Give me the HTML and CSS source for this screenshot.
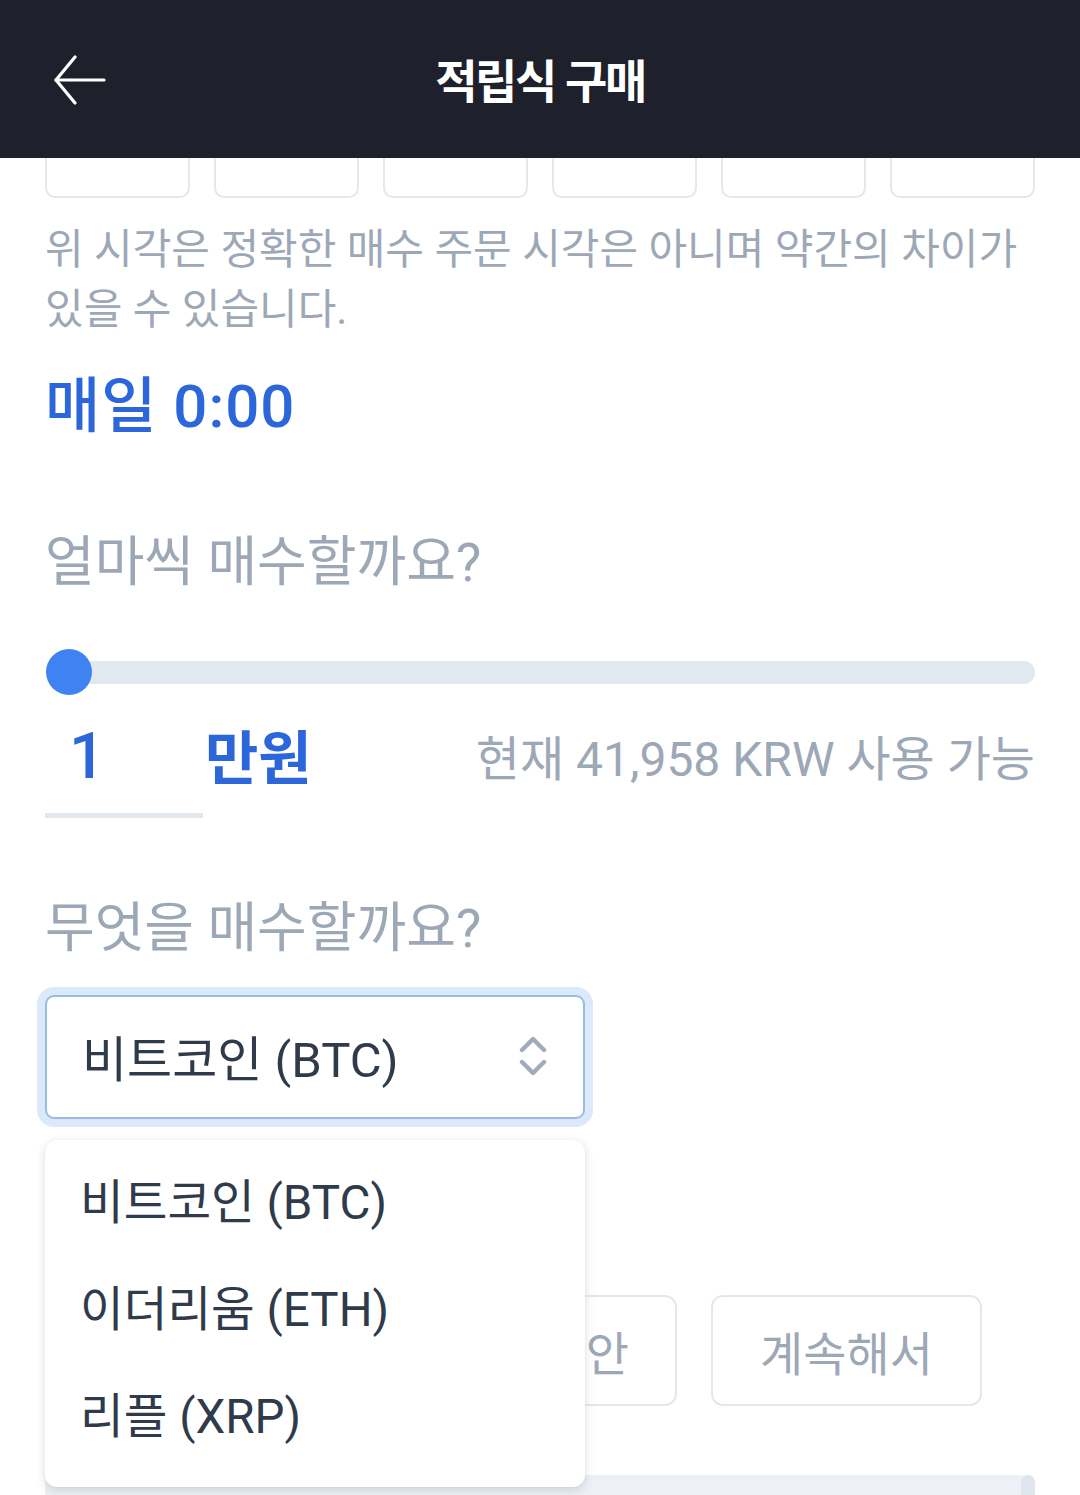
FILE: index.html
```html
<!DOCTYPE html>
<html lang="ko">
<head>
<meta charset="utf-8">
<title>적립식 구매</title>
<link rel="stylesheet" href="styles.css">
</head>
<body>
<header class="topbar">
  <button class="back" aria-label="뒤로">
    <svg width="54" height="50" viewBox="0 0 54 50" fill="none" stroke="#fff" stroke-width="3.2" stroke-linecap="round" stroke-linejoin="round">
      <path d="M3 25 H51"/>
      <path d="M22 2 L3 25 L22 48"/>
    </svg>
  </button>
  <h1 class="title">적립식 구매</h1>
</header>

<main class="content">
  <div class="days">
    <div class="day"></div>
    <div class="day"></div>
    <div class="day"></div>
    <div class="day"></div>
    <div class="day"></div>
    <div class="day"></div>
  </div>

  <p class="note">위 시각은 정확한 매수 주문 시각은 아니며 약간의 차이가 있을 수 있습니다.</p>

  <p class="schedule">매일 0:00</p>

  <h2 class="question q-amount">얼마씩 매수할까요?</h2>

  <div class="slider">
    <div class="track"></div>
    <div class="thumb"></div>
  </div>

  <div class="amount-row">
    <div class="amount-input">1</div>
    <div class="unit">만원</div>
    <div class="avail">현재 41,958 KRW 사용 가능</div>
  </div>

  <h2 class="question q-coin">무엇을 매수할까요?</h2>

  <div class="select-wrap">
    <div class="select">
      <span class="select-text">비트코인 (BTC)</span>
      <svg class="chev" width="28" height="42" viewBox="0 0 28 42" fill="none" stroke="#a0abbb" stroke-width="4.4" stroke-linecap="round" stroke-linejoin="round">
        <path d="M3 15 L14 4 L25 15"/>
        <path d="M3 27 L14 38 L25 27"/>
      </svg>
    </div>
    <ul class="menu">
      <li class="opt">비트코인 (BTC)</li>
      <li class="opt">이더리움 (ETH)</li>
      <li class="opt">리플 (XRP)</li>
    </ul>
  </div>

  <div class="periods">
    <div class="period p1"></div>
    <div class="period p2"><span class="p2-text">안</span></div>
    <div class="period p3">계속해서</div>
  </div>

  <div class="bottom-bar">
    <div class="bar-end"></div>
  </div>
</main>
</body>
</html>
```

FILE: styles.css
```css
* { box-sizing: border-box; }

html, body {
  margin: 0;
  padding: 0;
  background: #ffffff;
}

body {
  font-family: "Roboto", "Noto Sans CJK KR", sans-serif;
  color: #2d3748;
  overflow: hidden;
}

.topbar {
  position: fixed;
  top: 0;
  left: 0;
  right: 0;
  height: 158px;
  background: #1e212b;
  display: flex;
  align-items: center;
  justify-content: center;
  z-index: 10;
}

.back {
  position: absolute;
  left: 53px;
  top: 55px;
  width: 54px;
  height: 50px;
  padding: 0;
  border: 0;
  background: transparent;
  display: block;
}

.back svg { display: block; }

.title {
  margin: 0;
  margin-top: -2px;
  color: #ffffff;
  font-family: "Noto Sans CJK KR", sans-serif;
  font-weight: 700;
  font-size: 46px;
  letter-spacing: -2.5px;
  line-height: 60px;
}

.content {
  padding: 0 45px;
  position: relative;
}

.days {
  margin-top: 88px;
  display: grid;
  grid-template-columns: repeat(6, 1fr);
  gap: 24px;
}

.day {
  height: 110px;
  border: 2px solid #e3e8ee;
  border-radius: 10px;
}

.note {
  margin: 22px 0 0;
  font-size: 42px;
  letter-spacing: 0;
  line-height: 60px;
  color: #9da8b7;
}

.schedule {
  margin: 32px 0 0;
  font-size: 60px;
  line-height: 70px;
  font-weight: 500;
  color: #2b66db;
  letter-spacing: 1px;
}

.question {
  margin: 0;
  font-weight: 400;
  font-size: 54px;
  letter-spacing: 0;
  line-height: 70px;
  color: #9da8b7;
}

.q-amount { margin-top: 86px; }
.q-coin { margin-top: 76px; }

.slider {
  margin-top: 51px;
  height: 46px;
  position: relative;
  display: flex;
  align-items: center;
}

.track {
  width: 100%;
  height: 23px;
  background: #e2e8f0;
  border-radius: 12px;
  margin-left: 2px;
}

.thumb {
  position: absolute;
  left: 1px;
  top: 0;
  width: 46px;
  height: 46px;
  border-radius: 50%;
  background: #3f82f2;
}

.amount-row {
  margin-top: 27px;
  display: flex;
  align-items: flex-start;
}

.amount-input {
  width: 158px;
  padding-left: 24px;
  padding-bottom: 21px;
  line-height: 70px;
  font-size: 64px;
  font-weight: 500;
  color: #2b66db;
  border-bottom: 5px solid #e2e8f0;
}

.unit {
  margin-left: 2px;
  line-height: 70px;
  font-family: "Noto Sans CJK KR", sans-serif;
  font-size: 58px;
  font-weight: 700;
  letter-spacing: 0;
  color: #2b66db;
  margin-top: -3px;
}

.avail {
  margin-left: auto;
  line-height: 70px;
  font-size: 48px;
  letter-spacing: 0;
  color: #9da8b7;
  margin-top: 3px;
}

.select-wrap {
  margin-top: 31px;
  width: 540px;
  position: relative;
}

.select {
  height: 124px;
  border: 2px solid #98bde4;
  border-radius: 9px;
  box-shadow: 0 0 0 8px #dce9fa;
  background: #ffffff;
  display: flex;
  align-items: center;
  justify-content: space-between;
  padding: 0 36px 0 35px;
}

.select-text {
  font-size: 49px;
  letter-spacing: 0;
  color: #2f3b4b;
  margin-top: -4px;
}

.chev { display: block; margin-top: -2px; }

.menu {
  position: absolute;
  top: calc(100% + 21px);
  left: 0;
  width: 540px;
  height: 347px;
  margin: 0;
  padding: 10px 0 0;
  list-style: none;
  background: #ffffff;
  border-radius: 12px;
  box-shadow: 0 3px 10px rgba(30, 41, 59, 0.16), 0 0 2px rgba(30, 41, 59, 0.06);
  z-index: 5;
}

.opt {
  height: 107px;
  line-height: 107px;
  padding-left: 35px;
  font-size: 47.5px;
  letter-spacing: 0;
  color: #2f3b4b;
}

.periods {
  margin-top: 176px;
  display: flex;
  gap: 34px;
}

.period {
  height: 111px;
  border: 2px solid #e3e8ee;
  border-radius: 12px;
  display: flex;
  align-items: center;
  justify-content: center;
  font-family: "Noto Sans CJK KR", sans-serif;
  font-size: 47px;
  letter-spacing: 0;
  color: #9da8b7;
}

.p1 { width: 327px; }
.p2 {
  width: 271px;
  justify-content: flex-end;
  padding-right: 46px;
}
.p3 { width: 271px; }

.bottom-bar {
  margin-top: 69px;
  height: 80px;
  background: #edf1f6;
  border-radius: 8px 8px 0 0;
  display: flex;
  justify-content: flex-end;
}

.bar-end {
  width: 14px;
  height: 100%;
  background: #dfe5ec;
  border-radius: 7px 7px 0 0;
}
```
